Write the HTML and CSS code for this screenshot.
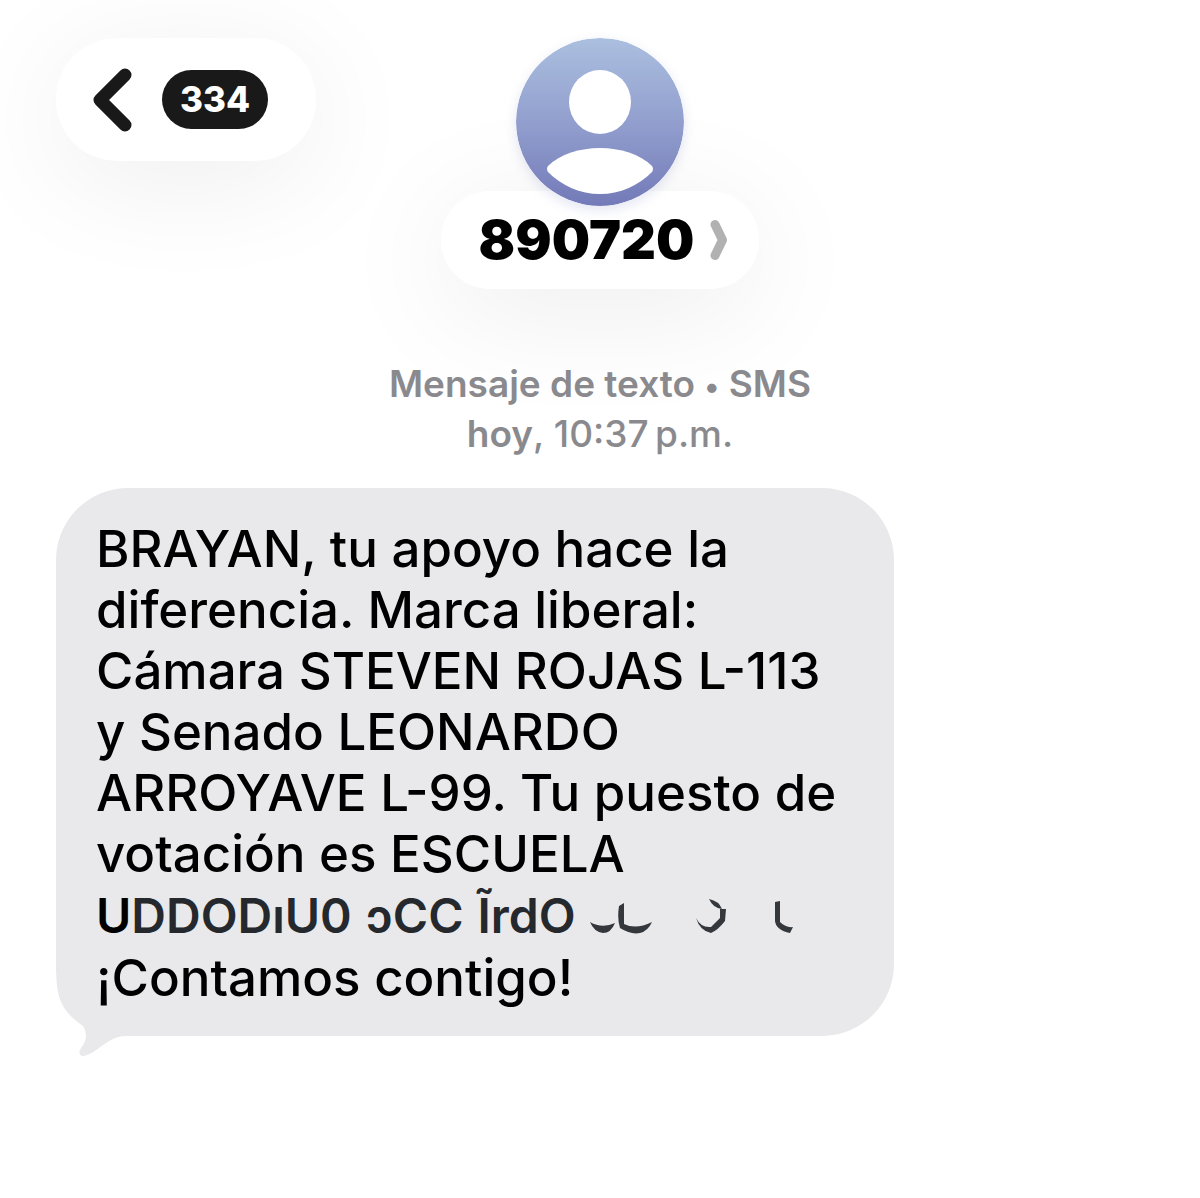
FILE: index.html
```html
<!DOCTYPE html>
<html lang="es">
<head>
<meta charset="utf-8">
<meta name="viewport" content="width=device-width, initial-scale=1">
<title>890720</title>
<link rel="stylesheet" href="styles.css">
</head>
<body>
<header class="header">
  <button class="back" type="button" aria-label="Volver, 334 mensajes sin leer">
    <svg class="back-icon" viewBox="0 0 40 64" aria-hidden="true"><path d="M33 7 8 32l25 25" fill="none" stroke="currentColor" stroke-width="13" stroke-linecap="round" stroke-linejoin="round"/></svg>
    <span class="count">334</span>
  </button>
  <button class="contact" type="button">
    <svg class="avatar" viewBox="0 0 168 168" aria-hidden="true">
      <defs><linearGradient id="sky" x1="0" y1="0" x2="0" y2="1"><stop offset="0" stop-color="#abbfdf"/><stop offset=".5" stop-color="#929fce"/><stop offset="1" stop-color="#737ab8"/></linearGradient></defs>
      <circle cx="84" cy="84" r="84" fill="url(#sky)"/>
      <ellipse cx="84" cy="64" rx="31" ry="32" fill="#fff"/>
      <path d="M32 128C44 116 64 110 84 110s40 6 52 18q2 3 0 6c-14 14-32 22-52 22S46 148 32 134q-2-3 0-6Z" fill="#fff"/>
    </svg>
    <span class="contact-name">890720
      <svg class="chevron" viewBox="0 0 18 42" aria-hidden="true"><path d="m5 5.500 7.500 15.500L5 36.500" fill="none" stroke="currentColor" stroke-width="9" stroke-linecap="round" stroke-linejoin="round"/></svg>
    </span>
  </button>
</header>
<main class="thread">
  <p class="meta"><b>Mensaje de texto <span class="dot">•</span> SMS</b><br><b>hoy</b>, 10:37&#8201;p.m.</p>
  <article class="bubble">
    <p class="text">BRAYAN, tu apoyo hace la<br>diferencia. Marca liberal:<br>Cámara STEVEN ROJAS L-113<br>y Senado LEONARDO<br>ARROYAVE L-99. Tu puesto de<br>votación es ESCUELA</p>
    <p class="smudge">
      <span><span class="clear">U</span>DDODıU0</span>
      <span>ɔCC</span>
      <span>ĨrdO</span>
      <svg class="traces" viewBox="0 0 206 44" aria-hidden="true"><g fill="#34383d"><path d="M0 28q12 7 25 1-4 10-12 10Q4 38 0 28ZM29 12l5-3v21q12 6 28-2-4 9-12 11-9 2-20-5-3-9-1-22ZM106 24q5 10 15 9l9-9v-9h6l-1 12q-7 9-14 12-11-2-15-15ZM119 5q10 2 13 10-9-1-13-10ZM185 8l5-1v21q6 6 13 5l-3 6q-14-3-15-12Z"/></g></svg>
    </p>
    <p class="text">¡Contamos contigo!</p>
    <svg class="tail" viewBox="0 0 70 100" aria-hidden="true"><path d="M0 0C0 28 1 42 12 55Q18 62 27 68 34 78 25 90 21 97 27 98C38 97 47 84 62 79Q66 78 70 78V0Z" fill="currentColor"/></svg>
  </article>
</main>
</body>
</html>
```
FILE: styles.css
```css
* {
  box-sizing: border-box;
}

body {
  margin: 0;
  background: #fff;
  color: #000;
  font-family: Inter, "Liberation Sans", sans-serif;
}

p {
  margin: 0;
}

button {
  border: 0;
  padding: 0;
  background: none;
  color: inherit;
  font: inherit;
  cursor: pointer;
}

svg {
  display: block;
}

.header {
  display: grid;
  grid-template-columns: 1fr auto 1fr;
  align-items: start;
  padding: 38px 56px 0;
}

.back {
  display: flex;
  align-items: center;
  justify-self: start;
  gap: 30px;
  padding: 32px 48px 32px 36px;
  border-radius: 61px;
  background: #fff;
  box-shadow: 0 20px 120px rgb(0 0 0 / 7%);
  color: #191919;
}

.back-icon {
  width: 40px;
  height: 64px;
  margin: -3px 0;
}

.count {
  padding: 0 18px;
  border-radius: 30px;
  background: #191919;
  color: #fff;
  font-size: 35px;
  font-weight: 800;
  line-height: 59px;
}

.contact {
  display: flex;
  flex-direction: column;
  align-items: center;
}

.avatar {
  z-index: 1;
  width: 168px;
  height: 168px;
  margin-bottom: -15px;
  border-radius: 50%;
  box-shadow: 0 4px 12px rgb(90 100 180 / 16%);
}

.contact-name {
  display: flex;
  align-items: center;
  gap: 16px;
  padding: 0 31px 0 38px;
  border-radius: 49px;
  background: #fff;
  box-shadow: 0 20px 120px rgb(0 0 0 / 8%);
  font-size: 54px;
  font-weight: 900;
  line-height: 98px;
}

.chevron {
  width: 18px;
  height: 42px;
  color: #b1b1b1;
}

.thread {
  padding: 70px 56px 80px;
}

.meta {
  color: #8a8a8e;
  font-size: 37px;
  font-weight: 500;
  line-height: 50px;
  text-align: center;
}

.meta b {
  font-weight: 600;
}

.dot {
  font-size: 30px;
  line-height: 30px;
}

.bubble {
  position: relative;
  isolation: isolate;
  width: fit-content;
  min-width: 77%;
  margin-top: 29px;
  padding: 30px 40px 28px;
  border-radius: 72px;
  background: #e9e9eb;
}

.text {
  font-size: 51px;
  font-weight: 550;
  line-height: 61px;
}

.smudge {
  display: flex;
  align-items: center;
  gap: 14px;
  color: #25292d;
  font-size: 48px;
  font-weight: 600;
  line-height: 63px;
}

.clear {
  color: #000;
}

.traces {
  width: 206px;
  height: 44px;
}

.tail {
  position: absolute;
  z-index: -1;
  bottom: -22px;
  left: 0;
  width: 70px;
  height: 100px;
  color: #e9e9eb;
}
```
